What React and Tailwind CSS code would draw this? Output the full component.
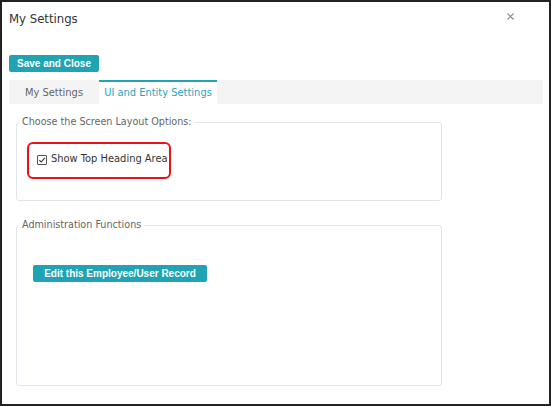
import { useState } from "react";

const font = { fontFamily: '"DejaVu Sans Condensed", "Liberation Sans", sans-serif' };
const btnFont = { fontFamily: '"Liberation Sans", Arial, sans-serif' };

function Panel({ title, children }) {
  return (
    <fieldset className="w-[426px] border border-[#dfe5ea] rounded-[3px] px-[2px]">
      <legend className="px-[3px] text-[10.7px] leading-[14px] text-[#666]">{title}</legend>
      {children}
    </fieldset>
  );
}

function CheckBox({ checked, onChange }) {
  return (
    <span
      role="checkbox"
      aria-checked={checked}
      onClick={() => onChange(!checked)}
      className="w-[10px] h-[10px] border border-[#555] rounded-[1px] bg-white flex items-center justify-center"
    >
      {checked && (
        <svg width="8" height="8" viewBox="0 0 8 8" fill="none" stroke="#333" strokeWidth="1.1">
          <path d="M1.3 4.2 3.2 6 6.8 1.8" />
        </svg>
      )}
    </span>
  );
}

export default function App() {
  const [showHeading, setShowHeading] = useState(true);
  const [tab, setTab] = useState("ui");

  return (
    <div style={font} className="w-[551px] h-[406px] border-2 border-[#222] bg-white text-[#333]">
      <div className="pt-[8px] pl-[7px] pr-[35px] flex justify-between items-start">
        <h2 className="text-[13px] leading-[18px] text-[#333]">My Settings</h2>
        <button className="mt-[2px] w-[8px] h-[8px] flex items-center justify-center">
          <svg width="7" height="7" viewBox="0 0 7 7" stroke="#8a8a8a" strokeWidth="1.1">
            <path d="M0.5 0.5 6.5 6.5M6.5 0.5 0.5 6.5" />
          </svg>
        </button>
      </div>

      <div className="pl-[7px]">
        <button
          style={btnFont}
          className="mt-[27px] w-[90px] h-[17px] rounded-[2px] bg-[#20a3b3] text-white text-[10px] font-bold leading-[17px] block"
        >
          Save and Close
        </button>

        <div className="mt-[8px] w-[534px] h-[24px] bg-[#f4f4f4] flex">
          <button
            onClick={() => setTab("my")}
            className={`w-[90px] h-[24px] text-[11px] ${tab === "my" ? "bg-white text-[#29a6b8] border-t-2 border-[#20a3b3]" : "text-[#666] pt-[2px]"}`}
          >
            My Settings
          </button>
          <button
            onClick={() => setTab("ui")}
            className={`w-[118px] h-[24px] text-[11px] ${tab === "ui" ? "bg-white text-[#29a6b8] border-t-2 border-[#20a3b3]" : "text-[#666] pt-[2px]"}`}
          >
            UI and Entity Settings
          </button>
        </div>

        <div className="pl-[7px] pt-[11px] flex flex-col gap-[17px]">
          <Panel title="Choose the Screen Layout Options:">
            <div className="mt-[13px] mb-[21px] ml-[8px] w-[144px] h-[37px] border-2 border-[#e8121b] rounded-[6px] pl-[8px] flex items-center">
              <div className="flex items-center gap-[4px] text-[11px] text-[#333] -mt-[2px]">
                <CheckBox checked={showHeading} onChange={setShowHeading} />
                <span>Show Top Heading Area</span>
              </div>
            </div>
          </Panel>

          <Panel title="Administration Functions">
            <div className="h-[153px] pt-[28px] pl-[14px]">
              <button
                style={btnFont}
                className="w-[174px] h-[17px] rounded-[2px] bg-[#20a3b3] text-white text-[10px] font-bold leading-[17px]"
              >
                Edit this Employee/User Record
              </button>
            </div>
          </Panel>
        </div>
      </div>
    </div>
  );
}
